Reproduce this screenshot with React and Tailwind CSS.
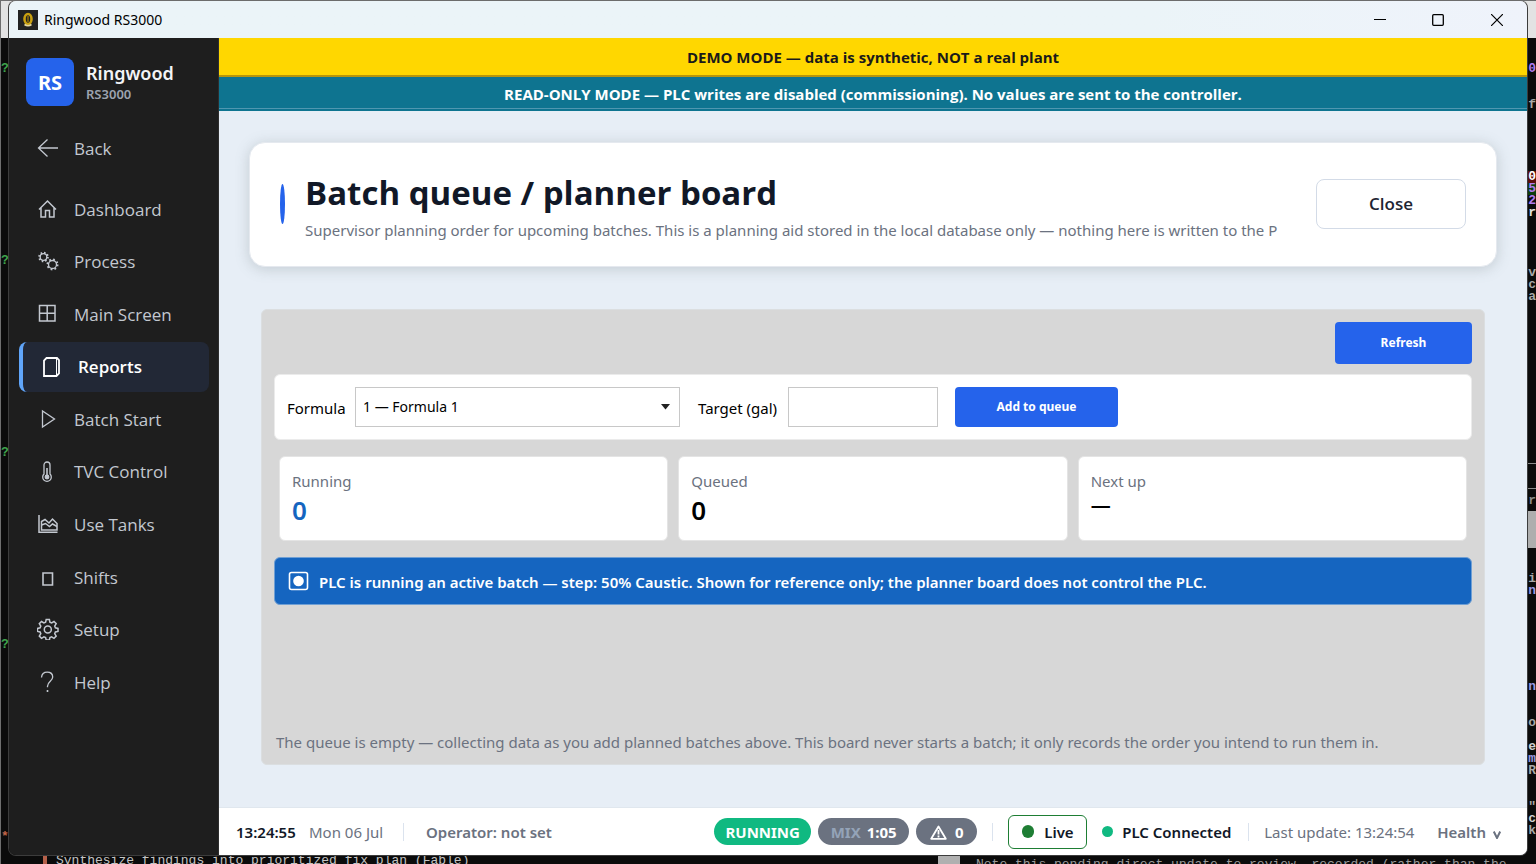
import { useState } from 'react'
import clsx from 'clsx'

const iconProps = {
  width: 22,
  height: 22,
  viewBox: '0 0 22 22',
  fill: 'none',
  stroke: 'currentColor',
  strokeWidth: 1.3,
  'aria-hidden': true,
}

const icons = {
  back: (
    <svg {...iconProps}>
      <path d="M21 11H1.5M10.500 2.500L1.500 11l9 8.500" />
    </svg>
  ),
  home: (
    <svg {...iconProps} strokeWidth="1.500">
      <path d="M2 11.500L10.500 3 19 11.500M4 9.800V19h4.500v-6.500h4V19H17V9.800" />
    </svg>
  ),
  process: (
    <svg {...iconProps}>
      <circle cx="6.500" cy="6" r="3.300" />
      <circle cx="6.500" cy="6" r="4.300" strokeWidth="2" strokeDasharray="1.500 1.877" />
      <circle cx="15.500" cy="13.500" r="4" />
      <circle cx="15.500" cy="13.500" r="5" strokeWidth="2" strokeDasharray="1.700 2.227" />
    </svg>
  ),
  grid: (
    <svg {...iconProps} strokeWidth="1.500">
      <path d="M2.500 2.500h15.500v15.500h-15.500zM10.200 2.500V18M2.500 10.200h15.500" />
    </svg>
  ),
  reports: (
    <svg {...iconProps} strokeWidth="1.800">
      <path d="M3 4.500v15.500h2.500L5.800 20h9.700l2.500-2.500V4L16 2H5.500z" />
      <path d="M15.500 2.500v17" strokeWidth="1" />
    </svg>
  ),
  play: (
    <svg {...iconProps}>
      <path d="M5.500 3v16L17.500 11z" />
    </svg>
  ),
  thermo: (
    <svg {...iconProps}>
      <path d="M7 13V4a3 3 0 0 1 6 0v9a4.300 4.300 0 1 1-6 0z" />
      <path d="M10 7v8" strokeWidth="1.600" />
      <circle cx="10" cy="16" r="1.800" fill="currentColor" />
    </svg>
  ),
  tanks: (
    <svg {...iconProps} strokeWidth="1.500">
      <path d="M2 2v17.300h18.500" />
      <path d="M4.500 17V8.500l3.500-2 4 3.500 3.500-4 4.500 4.500V17z" />
      <path d="M4.500 12l4-1.500 4 3 3-2.500 4.500 2.500" />
    </svg>
  ),
  box: (
    <svg {...iconProps} strokeWidth="1.600">
      <path d="M6 7h9.500v12H6z" />
    </svg>
  ),
  gear: (
    <svg {...iconProps} strokeWidth="1.500">
      <path d="M9.200 1.500h3.200l.5 2.700 1.700.8 2.400-1.500 2.200 2.200-1.500 2.400.7 1.700 2.600.6v3l-2.600.6-.7 1.700 1.500 2.400-2.200 2.200-2.400-1.500-1.700.7-.5 2.600H9.200l-.6-2.600-1.700-.7-2.400 1.500-2.200-2.200 1.500-2.400-.7-1.700-2.600-.6v-3l2.600-.6.7-1.700-1.500-2.400L4.500 3.500 6.900 5l1.700-.8z" />
      <circle cx="10.800" cy="11.600" r="3.500" />
    </svg>
  ),
  help: (
    <svg {...iconProps}>
      <path d="M4.500 6.500C4.800 3 7.200 1.200 10.200 1.200c3.200 0 5.500 1.900 5.500 4.800 0 4-5.200 4.500-5.200 9.200v1" />
      <path d="M10.500 19v2" strokeWidth="1.600" />
    </svg>
  ),
}

const navItems = [
  { label: 'Dashboard', icon: 'home' },
  { label: 'Process', icon: 'process' },
  { label: 'Main Screen', icon: 'grid' },
  { label: 'Reports', icon: 'reports' },
  { label: 'Batch Start', icon: 'play' },
  { label: 'TVC Control', icon: 'thermo' },
  { label: 'Use Tanks', icon: 'tanks' },
  { label: 'Shifts', icon: 'box' },
  { label: 'Setup', icon: 'gear' },
  { label: 'Help', icon: 'help' },
]

const stats = [
  { label: 'Running', value: '0', tone: 'text-[#1565c0]' },
  { label: 'Queued', value: '0', tone: 'text-black' },
  { label: 'Next up', value: '—', small: true, tone: 'text-black' },
]

// Terminal text that peeks out around the window
const leftMarks = [
  { y: 68, text: '?', tone: 'text-[#3fa34d]' },
  { y: 260, text: '?', tone: 'text-[#3fa34d]' },
  { y: 452, text: '?', tone: 'text-[#3fa34d]' },
  { y: 644, text: '?', tone: 'text-[#3fa34d]' },
  { y: 836, text: '*', tone: 'text-[#c0654a]' },
]

const rightMarks = [
  { y: 68, text: '0', tone: 'text-[#b07cf0]' },
  { y: 104, text: 'f', tone: 'text-[#a8a8a8]' },
  { y: 176, text: '0', tone: 'bg-[#5a0d0d] text-white' },
  { y: 188, text: '5', tone: 'bg-[#0d3d0d] text-[#b07cf0]' },
  { y: 200, text: '2', tone: 'text-[#b07cf0]' },
  { y: 212, text: 'r', tone: 'text-[#e0e0e0]' },
  { y: 272, text: 'v', tone: 'text-[#a8a8a8]' },
  { y: 284, text: 'c', tone: 'text-[#a8a8a8]' },
  { y: 296, text: 'a', tone: 'text-[#a8a8a8]' },
  { y: 500, text: 'r', tone: 'text-[#8a8a8a]' },
  { y: 578, text: 'i', tone: 'text-[#a8a8a8]' },
  { y: 590, text: 'n', tone: 'text-[#9a9ae0]' },
  { y: 686, text: 'n', tone: 'text-[#9a9ae0]' },
  { y: 722, text: 'o', tone: 'text-[#a8a8a8]' },
  { y: 746, text: 'e', tone: 'text-[#d0d0d0]' },
  { y: 758, text: 'm', tone: 'text-[#9a9ae0]' },
  { y: 770, text: 'R', tone: 'text-[#a8a8a8]' },
  { y: 806, text: '"', tone: 'text-[#a8a8a8]' },
  { y: 818, text: 'c', tone: 'text-[#d0d0d0]' },
  { y: 830, text: 'k', tone: 'text-[#a8a8a8]' },
]

function Backdrop() {
  return (
    <div
      aria-hidden="true"
      className="absolute inset-0 overflow-hidden border-t border-l border-[#6e6e6e] bg-[#0b0b0b] font-['Liberation_Mono',monospace] text-[13px] leading-3 font-bold"
    >
      <div className="h-[37px] bg-[#e3e3e3]" />
      {leftMarks.map((m) => (
        <span key={m.y} className={clsx('absolute left-0 -translate-y-1/2', m.tone)} style={{ top: m.y }}>
          {m.text}
        </span>
      ))}
      <div className="absolute top-[462px] right-0 h-[26px] w-2 border-y border-[#8a8a8a]" />
      <div className="absolute top-[510px] right-0 h-[37px] w-2 bg-[#aeaeae]" />
      {rightMarks.map((m) => (
        <span key={m.y} className={clsx('absolute right-0 -translate-y-1/2', m.tone)} style={{ top: m.y }}>
          {m.text}
        </span>
      ))}
      <div className="absolute bottom-0 left-[42px] h-2 w-1 bg-[#b5604a]" />
      <div className="absolute -bottom-[3px] left-[55px] font-normal whitespace-nowrap text-[#c4c4c4]">
        Synthesize findings into prioritized fix plan (Fable)
      </div>
      <div className="absolute bottom-0 left-[937px] h-2 w-[22px] bg-[#b0b0b0]" />
      <div className="absolute -bottom-[7px] left-[975px] font-normal whitespace-nowrap text-[#9a9a9a]">
        Note this pending direct update to review, recorded (rather than the
      </div>
    </div>
  )
}

function TitleBar() {
  return (
    <header className="flex h-[37px] shrink-0 items-center justify-between bg-linear-to-r from-[#ebf4f8] from-75% to-[#eff3fb] pl-[9px]">
      <div className="flex items-center gap-[6px]">
        <svg width="20" height="20" viewBox="0 0 20 20" aria-hidden="true">
          <rect width="20" height="20" fill="#222" />
          <ellipse cx="10" cy="9" rx="3.500" ry="5" fill="none" stroke="#c9a010" strokeWidth="2.600" />
          <path d="M10 6v6" stroke="#8a6c08" strokeWidth="1.600" />
          <path d="M6.500 14.500q3.500 2.500 7 0" fill="none" stroke="#e6d9a0" strokeWidth="1.600" />
        </svg>
        <span className="text-sm text-black">Ringwood RS3000</span>
      </div>
      <div className="flex text-black">
        <button aria-label="Minimize" className="flex h-9 w-[58px] items-center justify-center">
          <svg width="12" height="12" viewBox="0 0 12 12" fill="none" stroke="currentColor">
            <path d="M0 5.500h12" />
          </svg>
        </button>
        <button aria-label="Maximize" className="flex h-9 w-[58px] items-center justify-center">
          <svg width="12" height="12" viewBox="0 0 12 12" fill="none" stroke="currentColor" strokeWidth="1.300">
            <rect x=".7" y=".7" width="10.600" height="10.600" rx="1" />
          </svg>
        </button>
        <button aria-label="Close window" className="flex h-9 w-[60px] items-center justify-center">
          <svg width="12" height="12" viewBox="0 0 12 12" fill="none" stroke="currentColor" strokeWidth="1.200">
            <path d="M0 0l12 12M12 0L0 12" />
          </svg>
        </button>
      </div>
    </header>
  )
}

function NavItem({ label, icon, active }) {
  return (
    <a
      href="#"
      aria-current={active ? 'page' : undefined}
      className={clsx(
        "flex h-[50px] items-center gap-[15px] rounded-lg pl-[18px] font-['Open_Sans',sans-serif] text-[17px]",
        active ? 'border-l-4 border-[#60a5fa] bg-[#222836] font-semibold text-white' : 'text-[#c3c8d0]'
      )}
    >
      {icons[icon]}
      <span className="pt-px">{label}</span>
    </a>
  )
}

function Sidebar() {
  return (
    <aside className="w-[210px] shrink-0 bg-[#1e1e1e] px-[10px] pt-5 shadow-[inset_-1px_0_#2e2e2e]">
      <div className="mb-[17px] flex items-center gap-3 pl-[7px]">
        <div className="flex size-12 items-center justify-center rounded-lg bg-[#2563eb] pt-0.5 text-xl font-bold text-white">
          RS
        </div>
        <div>
          <div className="text-lg leading-6 font-semibold text-[#f3f4f6]">Ringwood</div>
          <div className="text-[13px] leading-[18px] font-semibold text-[#9ca3af]">RS3000</div>
        </div>
      </div>
      <NavItem label="Back" icon="back" />
      <nav className="mt-[11px] flex h-[523px] flex-col justify-between">
        {navItems.map((item) => (
          <NavItem key={item.label} {...item} active={item.label === 'Reports'} />
        ))}
      </nav>
    </aside>
  )
}

function PageHeader() {
  return (
    <section className="flex h-[125px] items-center rounded-2xl border border-[#e5e9ef] bg-white px-[30px] pb-0.5 shadow-[0_2px_14px_rgba(100,116,120,0.28)]">
      <div className="h-10 w-[5px] shrink-0 rounded-[50%] bg-[#2563eb]" />
      <div className="mx-5 min-w-0 flex-1 pt-1.5">
        <h1 className="font-['Open_Sans',sans-serif] text-[33px] leading-[46px] font-bold text-[#111827]">
          Batch queue / planner board
        </h1>
        <p className="overflow-hidden text-[15px] leading-7 whitespace-nowrap text-[#6b7280]">
          Supervisor planning order for upcoming batches. This is a planning aid stored in the local database only — nothing here is written to the P
        </p>
      </div>
      <button className="h-[50px] w-[150px] shrink-0 rounded-lg border border-[#d3dbe7] font-['Open_Sans',sans-serif] text-[17px] font-semibold text-[#1e2533]">
        Close
      </button>
    </section>
  )
}

function PlannerBoard() {
  const [formula, setFormula] = useState('1')
  const [target, setTarget] = useState('')

  return (
    <section className="mx-3 mt-[42px] flex flex-1 flex-col rounded-md border border-[#dbdee0] bg-[#d7d7d7] px-3 pt-3 pb-2">
      <button className="h-[42px] w-[137px] self-end rounded bg-[#2563eb] text-xs font-bold text-white">
        Refresh
      </button>

      <form
        onSubmit={(e) => e.preventDefault()}
        className="mt-[10px] flex h-[66px] items-center rounded-md border border-[#ebebeb] bg-white px-3 text-[15px] text-black"
      >
        <label htmlFor="formula" className="w-[68px] pt-0.5">Formula</label>
        <div className="relative">
          <select
            id="formula"
            value={formula}
            onChange={(e) => setFormula(e.target.value)}
            className="h-10 w-[325px] appearance-none border border-[#c8c8c8] bg-white pl-[7px] text-sm"
          >
            <option value="1">1 — Formula 1</option>
          </select>
          <svg className="pointer-events-none absolute top-[17px] right-[10px]" width="9" height="6" viewBox="0 0 9 6" aria-hidden="true">
            <path d="M0 0h9L4.500 5.500z" fill="#222" />
          </svg>
        </div>
        <label htmlFor="target" className="ml-[18px] w-[90px] pt-0.5">Target (gal)</label>
        <input
          id="target"
          value={target}
          onChange={(e) => setTarget(e.target.value)}
          className="h-10 w-[150px] border border-[#c8c8c8] px-2"
        />
        <button className="ml-[17px] h-10 w-[163px] rounded bg-[#2563eb] text-xs font-bold text-white">
          Add to queue
        </button>
      </form>

      <div className="mx-[5px] mt-4 grid grid-cols-3 gap-[10px]">
        {stats.map((s) => (
          <div key={s.label} className="h-[85px] rounded-md border border-[#e4e4e4] bg-white px-3 pt-3">
            <div className="text-[15px] leading-6 text-[#6b7280]">{s.label}</div>
            <div className={clsx('font-semibold', s.small ? 'text-xl leading-6' : 'text-[26px] leading-[34px]', s.tone)}>
              {s.value}
            </div>
          </div>
        ))}
      </div>

      <div className="mt-4 flex h-12 items-center gap-[10px] rounded-md border border-[#6f9fd4] bg-[#1565c0] px-[13px] text-[15px] font-semibold text-white">
        <svg width="21" height="20" viewBox="0 0 21 20" aria-hidden="true">
          <rect x="1.500" y="1.500" width="18" height="17" rx="2" fill="none" stroke="#fff" strokeWidth="1.600" />
          <circle cx="10.500" cy="10" r="5.300" fill="#fff" />
        </svg>
        <span className="pt-0.5">
          PLC is running an active batch — step: 50% Caustic. Shown for reference only; the planner board does not control the PLC.
        </span>
      </div>

      <p className="mt-auto px-[2px] text-[15px] leading-7 text-[#6b7280]">
        The queue is empty — collecting data as you add planned batches above. This board never starts a batch; it only records the order you intend to run them in.
      </p>
    </section>
  )
}

function Divider() {
  return <span className="h-[18px] w-px bg-[#dbe3ee]" />
}

function StatusBar() {
  return (
    <footer className="flex h-12 shrink-0 items-center justify-between border-t border-[#e0e7ee] bg-white pr-[26px] pl-[17px] text-[15px] whitespace-nowrap">
      <div className="flex items-center">
        <span className="w-[73px] pt-0.5 font-semibold text-[#111827]">13:24:55</span>
        <span className="w-[94px] pt-0.5 text-[#6b7280]">Mon 06 Jul</span>
        <Divider />
        <span className="ml-[22px] pt-0.5 font-semibold text-[#6b7280]">Operator: not set</span>
      </div>

      <div className="flex items-center">
        <span className="flex h-[27px] w-[97px] items-center justify-center rounded-full bg-[#10b981] pt-0.5 font-bold text-white">
          RUNNING
        </span>
        <span className="ml-[7px] flex h-[27px] w-[91px] items-center justify-center gap-[6px] rounded-full bg-[#6b7280] pt-0.5 font-bold text-white">
          <span className="text-[#94a3b8]">MIX</span> 1:05
        </span>
        <span className="mr-[15px] ml-[7px] flex h-[27px] w-[61px] items-center justify-center gap-2 rounded-full bg-[#6b7280] pt-0.5 font-bold text-white">
          <svg width="17" height="15" viewBox="0 0 17 15" fill="none" stroke="#fff" aria-hidden="true">
            <path d="M8.500 1.500L1.200 13.800h14.600z" strokeWidth="1.800" strokeLinejoin="round" />
            <path d="M8.500 5v4.500M8.500 10.500v2" strokeWidth="1.800" />
          </svg>
          0
        </span>
        <Divider />
        <button className="ml-[15px] flex h-[34px] w-[79px] items-center gap-[10px] rounded-md border border-[#1e7e34] pl-[13px] font-semibold text-[#111827]">
          <span className="h-[13px] w-3 rounded-full bg-[#1e7e34]" />
          <span className="pt-0.5">Live</span>
        </button>
        <span className="mr-[9px] ml-[15px] size-[11px] rounded-full bg-[#10b981]" />
        <span className="w-[126px] pt-0.5 font-semibold text-[#111827]">PLC Connected</span>
        <Divider />
        <span className="ml-[15px] w-[173px] pt-0.5 text-[#6b7280]">Last update: 13:24:54</span>
        <button className="flex items-center gap-[7px] pt-0.5 font-semibold text-[#6b7280]">
          Health
          <svg className="mt-1" width="8" height="8" viewBox="0 0 8 8" fill="none" stroke="currentColor" strokeWidth="2" aria-hidden="true">
            <path d="M.8 .5L4 7 7.200 .5" />
          </svg>
        </button>
      </div>
    </footer>
  )
}

export default function App() {
  return (
    <div className="relative h-screen min-h-[780px] px-2 pb-2 font-['Noto_Sans','Open_Sans',sans-serif]">
      <Backdrop />
      <div className="relative flex h-full flex-col overflow-hidden rounded-lg border border-[#6c6c6c] border-x-[#3c3c3c] border-b-[#3c3c3c]">
        <TitleBar />
        <div className="flex min-h-0 flex-1">
          <Sidebar />
          <div className="flex min-w-0 flex-1 flex-col bg-[#e7eef6]">
            <div className="flex h-[39px] shrink-0 items-center justify-center border-b-2 border-[#b8960a] bg-[#ffd700] pt-0.5 font-['Open_Sans',sans-serif] text-[15px] font-bold text-[#1a1a1a]">
              DEMO MODE — data is synthetic, NOT a real plant
            </div>
            <div className="shrink-0 border-b-2 border-[#0e7490] bg-[#0e7490]">
              <div className="flex h-8 items-center justify-center border-b border-[#4f97b0] pt-[3px] font-['Open_Sans',sans-serif] text-[15px] font-bold text-white">
                READ-ONLY MODE — PLC writes are disabled (commissioning). No values are sent to the controller.
              </div>
            </div>
            <main className="flex min-h-0 flex-1 flex-col px-[30px] pt-[31px] pb-[42px]">
              <PageHeader />
              <PlannerBoard />
            </main>
            <StatusBar />
          </div>
        </div>
      </div>
    </div>
  )
}
